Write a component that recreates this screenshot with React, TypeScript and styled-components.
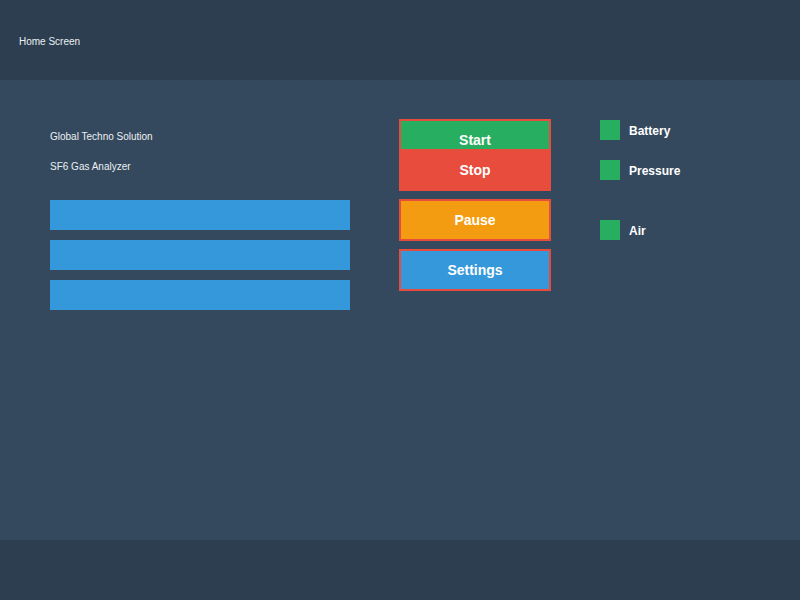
import * as React from 'react';
import styled, { createGlobalStyle } from 'styled-components';

const GlobalStyle = createGlobalStyle`
  html, body {
    margin: 0;
    padding: 0;
    background: #34495e;
    font-family: 'Liberation Sans', Arial, sans-serif;
  }
`;

const Screen = styled.div`
  display: flex;
  flex-direction: column;
  width: 800px;
  height: 600px;
  background: #34495e;
  color: #ecf0f1;
`;

const Header = styled.header`
  display: flex;
  align-items: center;
  height: 80px;
  padding: 2px 0 0 19px;
  background: #2c3e50;
  font-size: 10px;
  box-sizing: border-box;
`;

const Footer = styled.footer`
  height: 60px;
  background: #2c3e50;
`;

const Main = styled.main`
  flex: 1;
  display: grid;
  grid-template-columns: 349px 201px 1fr;
  align-items: start;
  padding: 39px 0 0 50px;
`;

const InfoColumn = styled.section`
  display: flex;
  flex-direction: column;
  padding-top: 3px;
`;

const InfoLine = styled.div`
  font-size: 10px;
  line-height: 30px;
`;

const Bars = styled.div`
  display: flex;
  flex-direction: column;
  gap: 10px;
  margin-top: 18px;
`;

const Bar = styled.div`
  width: 300px;
  height: 30px;
  background: #3498db;
`;

const ButtonColumn = styled.section`
  display: flex;
  flex-direction: column;
  width: 152px;
`;

const ActionButton = styled.button<{ $bg: string; $overlap?: boolean }>`
  position: relative;
  height: 42px;
  margin: ${({ $overlap }) => ($overlap ? '-12px 0 0' : '8px 0 0')};
  padding: 0;
  border: 2px solid #e74c3c;
  background: ${({ $bg }) => $bg};
  color: #fff;
  font-family: 'Liberation Sans', Arial, sans-serif;
  font-size: 14px;
  font-weight: bold;
  cursor: pointer;
  &:first-child {
    margin-top: 0;
  }
`;

const StatusColumn = styled.section`
  display: flex;
  flex-direction: column;
  padding-top: 1px;
`;

const StatusRow = styled.div<{ $spacing: number }>`
  display: flex;
  align-items: center;
  gap: 9px;
  height: 20px;
  margin-top: ${({ $spacing }) => $spacing}px;
  &:first-child {
    margin-top: 0;
  }
`;

const Lamp = styled.span`
  width: 20px;
  height: 20px;
  background: #27ae60;
`;

const StatusLabel = styled.span`
  padding-top: 2px;
  color: #fff;
  font-size: 12px;
  font-weight: bold;
`;

const statuses = [
  { label: 'Battery', spacing: 0 },
  { label: 'Pressure', spacing: 20 },
  { label: 'Air', spacing: 40 },
];

const App = () => (
  <Screen>
    <GlobalStyle />
    <Header>Home Screen</Header>
    <Main>
      <InfoColumn>
        <InfoLine>Global Techno Solution</InfoLine>
        <InfoLine>SF6 Gas Analyzer</InfoLine>
        <Bars>
          <Bar />
          <Bar />
          <Bar />
        </Bars>
      </InfoColumn>
      <ButtonColumn>
        <ActionButton $bg="#27ae60">Start</ActionButton>
        <ActionButton $bg="#e74c3c" $overlap>
          Stop
        </ActionButton>
        <ActionButton $bg="#f39c12">Pause</ActionButton>
        <ActionButton $bg="#3498db">Settings</ActionButton>
      </ButtonColumn>
      <StatusColumn>
        {statuses.map((s) => (
          <StatusRow key={s.label} $spacing={s.spacing}>
            <Lamp />
            <StatusLabel>{s.label}</StatusLabel>
          </StatusRow>
        ))}
      </StatusColumn>
    </Main>
    <Footer />
  </Screen>
);

export default App;
